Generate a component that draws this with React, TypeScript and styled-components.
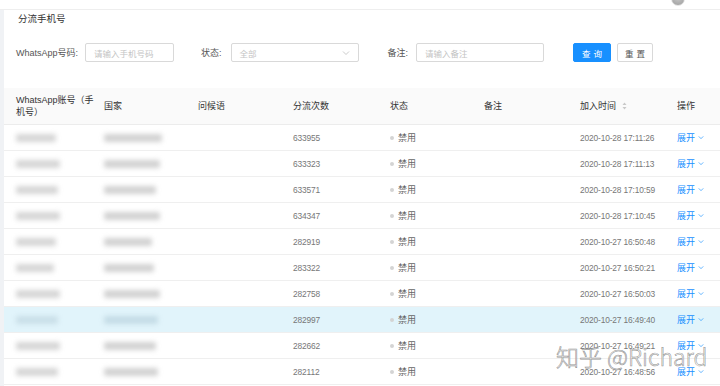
import styled, { createGlobalStyle } from 'styled-components';

const GlobalStyle = createGlobalStyle`
    html, body {
        margin: 0;
        padding: 0;
        background: #fff;
    }
    body {
        font-family: "Liberation Sans", "Noto Sans CJK SC", sans-serif;
        -webkit-font-smoothing: antialiased;
    }
`;

const Page = styled.div`
    position: relative;
    width: 720px;
    height: 386px;
    overflow: hidden;
    background: #fff;
    display: flex;
    flex-direction: column;
`;

const TopBar = styled.div`
    height: 9px;
    flex-shrink: 0;
    border-bottom: 1px solid #eeeeee;
    display: flex;
    justify-content: flex-end;
    align-items: flex-end;
    padding-right: 35px;
`;

const Avatar = styled.div`
    width: 12px;
    height: 12px;
    border-radius: 50%;
    margin-bottom: 3px;
    background: radial-gradient(circle at 50% 40%, #c8c8c8 0, #a9a9a9 70%);
    border: 1px solid #e4e4e4;
`;

const Body = styled.div`
    flex: 1;
    display: flex;
    min-height: 0;
`;

const SideStrip = styled.div`
    width: 4px;
    flex-shrink: 0;
    background: #f0f2f5;
`;

const Content = styled.div`
    flex: 1;
    display: flex;
    flex-direction: column;
    min-width: 0;
`;

const Title = styled.div`
    padding: 2px 0 0 14px;
    height: 14px;
    line-height: 14px;
    font-size: 9.5px;
    color: #333;
`;

const FilterRow = styled.div`
    display: flex;
    align-items: center;
    padding: 17px 0 0 12px;
    height: 19px;
`;

const Field = styled.div<{ $gap?: number }>`
    display: flex;
    align-items: center;
    margin-right: ${({ $gap }) => $gap ?? 28}px;
`;

const Label = styled.span<{ $space: number }>`
    font-size: 9px;
    color: #555;
    margin-right: ${({ $space }) => $space}px;
    white-space: nowrap;
`;

const Input = styled.div<{ $width: number }>`
    box-sizing: border-box;
    width: ${({ $width }) => $width}px;
    height: 19px;
    border: 1px solid #d9d9d9;
    border-radius: 2px;
    padding: 0 8px;
    display: flex;
    align-items: center;
    justify-content: space-between;
    font-size: 8.5px;
    color: #c4c4c4;
`;

const Chevron = styled.svg<{ $small?: boolean }>`
    width: ${({ $small }) => ($small ? 6 : 8)}px;
    height: ${({ $small }) => ($small ? 5 : 6)}px;
`;

const Button = styled.div<{ $primary?: boolean }>`
    box-sizing: border-box;
    height: 19px;
    width: ${({ $primary }) => ($primary ? 38 : 36)}px;
    margin-right: 6px;
    border-radius: 2px;
    display: flex;
    align-items: center;
    justify-content: center;
    font-size: 8.5px;
    letter-spacing: 3px;
    text-indent: 3px;
    color: ${({ $primary }) => ($primary ? '#fff' : '#555')};
    background: ${({ $primary }) => ($primary ? '#1890ff' : '#fff')};
    border: 1px solid ${({ $primary }) => ($primary ? '#1890ff' : '#d9d9d9')};
`;

const Table = styled.div`
    margin-top: 26px;
    display: flex;
    flex-direction: column;
`;

const columns = '88px 94px 95px 97px 94px 96px 97px 1fr';

const HeaderRow = styled.div`
    display: grid;
    grid-template-columns: ${columns};
    height: 37px;
    box-sizing: border-box;
    background: #fafafa;
    border-bottom: 1px solid #ececec;
    align-items: center;
`;

const HeadCell = styled.div`
    padding: 0 0 0 12px;
    font-size: 9px;
    line-height: 12px;
    color: #333;
    display: flex;
    align-items: center;
    gap: 6px;
`;

const HeadWrap = styled.span`
    width: 80px;
    flex-shrink: 0;
`;

const Row = styled.div<{ $active?: boolean }>`
    display: grid;
    grid-template-columns: ${columns};
    height: 26px;
    box-sizing: border-box;
    border-bottom: 1px solid #efefef;
    align-items: center;
    background: ${({ $active }) => ($active ? '#e1f4fb' : '#fff')};
`;

const Cell = styled.div`
    padding: 0 0 0 12px;
    font-size: 9px;
    color: #666;
    display: flex;
    align-items: center;
    white-space: nowrap;
`;

const Num = styled.span`
    font-size: 8.4px;
    letter-spacing: -0.15px;
    color: #777;
`;

const Blur = styled.div<{ $width: number; $tone: string }>`
    width: ${({ $width }) => $width}px;
    height: 8px;
    border-radius: 2px;
    background: ${({ $tone }) => $tone};
    filter: blur(2.5px);
`;

const Dot = styled.span`
    width: 4px;
    height: 4px;
    border-radius: 50%;
    background: #d4d4d4;
    margin-right: 4px;
`;

const Expand = styled.span`
    color: #1890ff;
    font-size: 9px;
    display: flex;
    align-items: center;
    gap: 3px;
`;

const Watermark = styled.div`
    position: absolute;
    left: 556px;
    top: 339px;
    font-family: "Noto Sans CJK SC", "DejaVu Sans", sans-serif;
    font-weight: 300;
    font-size: 23px;
    color: rgba(255, 255, 255, 0.75);
    -webkit-text-stroke: 0.6px rgba(120, 120, 120, 0.8);
    white-space: nowrap;
`;

const SortIcon = () => (
    <svg width="5" height="8" viewBox="0 0 5 8">
        <path d="M2.5 0.5 L4.5 3 H0.5 Z" fill="#c8c8c8" />
        <path d="M2.5 7.5 L4.5 5 H0.5 Z" fill="#c8c8c8" />
    </svg>
);

const rows = [
    { count: '633955', time: '2020-10-28 17:11:26', a: 40, b: 58 },
    { count: '633323', time: '2020-10-28 17:11:13', a: 44, b: 56 },
    { count: '633571', time: '2020-10-28 17:10:59', a: 42, b: 52 },
    { count: '634347', time: '2020-10-28 17:10:45', a: 44, b: 56 },
    { count: '282919', time: '2020-10-27 16:50:48', a: 40, b: 48 },
    { count: '283322', time: '2020-10-27 16:50:21', a: 38, b: 50 },
    { count: '282758', time: '2020-10-27 16:50:03', a: 44, b: 56 },
    { count: '282997', time: '2020-10-27 16:49:40', a: 42, b: 54 },
    { count: '282662', time: '2020-10-27 16:49:21', a: 44, b: 52 },
    { count: '282112', time: '2020-10-27 16:48:56', a: 42, b: 54 },
];

export default function App() {
    return (
        <>
            <GlobalStyle />
            <Page>
                <TopBar>
                    <Avatar />
                </TopBar>
                <Body>
                    <SideStrip />
                    <Content>
                        <Title>分流手机号</Title>
                        <FilterRow>
                            <Field $gap={27}>
                                <Label $space={7}>WhatsApp号码:</Label>
                                <Input $width={89}>请输入手机号码</Input>
                            </Field>
                            <Field $gap={29}>
                                <Label $space={9}>状态:</Label>
                                <Input $width={128}>
                                    全部
                                    <Chevron viewBox="0 0 8 6">
                                        <path d="M1 1.5 L4 4.5 L7 1.5" fill="none" stroke="#c4c4c4" strokeWidth="0.9" />
                                    </Chevron>
                                </Input>
                            </Field>
                            <Field $gap={29}>
                                <Label $space={8}>备注:</Label>
                                <Input $width={128}>请输入备注</Input>
                            </Field>
                            <Button $primary>查询</Button>
                            <Button>重置</Button>
                        </FilterRow>

                        <Table>
                            <HeaderRow>
                                <HeadCell>
                                    <HeadWrap>WhatsApp账号（手机号）</HeadWrap>
                                </HeadCell>
                                <HeadCell>国家</HeadCell>
                                <HeadCell>问候语</HeadCell>
                                <HeadCell>分流次数</HeadCell>
                                <HeadCell>状态</HeadCell>
                                <HeadCell>备注</HeadCell>
                                <HeadCell>
                                    加入时间
                                    <SortIcon />
                                </HeadCell>
                                <HeadCell>操作</HeadCell>
                            </HeaderRow>
                            {rows.map((r, i) => (
                                <Row key={r.count} $active={i === 7}>
                                    <Cell>
                                        <Blur $width={r.a} $tone={i === 7 ? '#c9dfe8' : '#d6d6d6'} />
                                    </Cell>
                                    <Cell>
                                        <Blur $width={r.b} $tone={i === 7 ? '#c4dce6' : '#d2d2d2'} />
                                    </Cell>
                                    <Cell />
                                    <Cell>
                                        <Num>{r.count}</Num>
                                    </Cell>
                                    <Cell>
                                        <Dot />
                                        禁用
                                    </Cell>
                                    <Cell />
                                    <Cell>
                                        <Num>{r.time}</Num>
                                    </Cell>
                                    <Cell>
                                        <Expand>
                                            展开
                                            <Chevron $small viewBox="0 0 8 6">
                                                <path d="M1 1.5 L4 4.5 L7 1.5" fill="none" stroke="#1890ff" strokeWidth="0.9" />
                                            </Chevron>
                                        </Expand>
                                    </Cell>
                                </Row>
                            ))}
                        </Table>
                    </Content>
                </Body>
                <Watermark>知乎 @Richard</Watermark>
            </Page>
        </>
    );
}
